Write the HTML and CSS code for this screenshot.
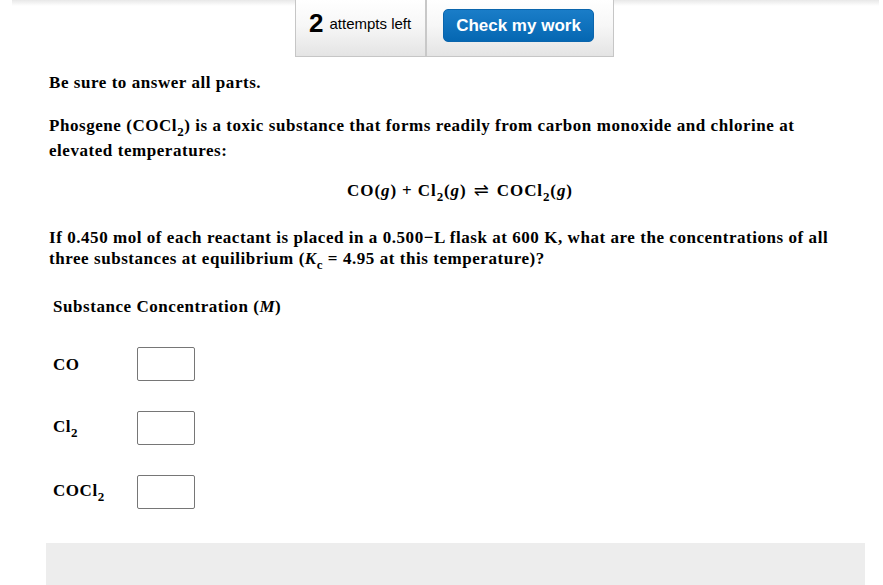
FILE: index.html
```html
<!DOCTYPE html>
<html>
<head>
<meta charset="utf-8">
<link rel="stylesheet" href="styles.css">
</head>
<body>
<div class="topshade"></div>
<div class="header">
  <div class="toolbar">
    <div class="attempts"><span class="num">2</span><span class="lbl">attempts left</span></div>
    <div class="check"><button class="btn">Check my work</button></div>
  </div>
</div>
<div class="content">
  <p class="intro">Be sure to answer all parts.</p>
  <p class="para">Phosgene (COCl<sub>2</sub>) is a toxic substance that forms readily from carbon monoxide and chlorine at elevated temperatures:</p>
  <p class="eq">CO(<i>g</i>) + Cl<sub>2</sub>(<i>g</i>) <span class="arrow">&#x21CC;</span> COCl<sub>2</sub>(<i>g</i>)</p>
  <p class="para q">If 0.450 mol of each reactant is placed in a 0.500&minus;L flask at 600 K, what are the concentrations of all three substances at equilibrium (<i>K</i><sub>c</sub> = 4.95 at this temperature)?</p>
  <div class="table">
    <div class="thead">Substance Concentration (<i>M</i>)</div>
    <div class="row"><span class="name">CO</span><input class="box" type="text"></div>
    <div class="row"><span class="name">Cl<sub>2</sub></span><input class="box" type="text"></div>
    <div class="row"><span class="name">COCl<sub>2</sub></span><input class="box" type="text"></div>
  </div>
</div>
<div class="footer"></div>
</body>
</html>
```
FILE: styles.css
```css
html, body {
  margin: 0;
  padding: 0;
  background: #fff;
}
body {
  width: 883px;
  height: 585px;
  overflow: hidden;
  position: relative;
  font-family: "Liberation Serif", "Times New Roman", serif;
  color: #000;
}
.topshade {
  position: absolute;
  left: 12px;
  right: 4px;
  top: 0;
  height: 6px;
  background: linear-gradient(#e8e8e8, rgba(255,255,255,0));
}
.header {
  display: flex;
  padding-left: 295px;
}
.toolbar {
  position: relative;
  display: flex;
  height: 56px;
  border: 1px solid #c6c6c6;
  border-top: none;
  background: linear-gradient(#ffffff 0%, #f7f7f7 45%, #e4e4e4 100%);
}
.attempts {
  width: 131px;
  display: flex;
  align-items: flex-start;
  padding-top: 10px;
  padding-left: 13px;
  box-sizing: border-box;
  border-right: 2px solid #c8c8c8;
  font-family: "Liberation Sans", Arial, sans-serif;
}
.num {
  font-weight: bold;
  font-size: 26px;
  line-height: 26px;
}
.lbl {
  font-size: 15px;
  margin-left: 6px;
  margin-top: 5px;
}
.check {
  width: 186px;
  padding: 9px 0 0 16px;
  box-sizing: border-box;
}
.btn {
  width: 151px;
  height: 33px;
  border: 1px solid #0a65ad;
  border-radius: 5px;
  background: linear-gradient(#1a7dc8, #0567b2);
  color: #fff;
  font-family: "Liberation Sans", Arial, sans-serif;
  font-weight: bold;
  font-size: 17px;
  padding: 0;
}
.content {
  padding-left: 49px;
  padding-right: 40px;
  font-weight: bold;
  font-size: 17px;
  letter-spacing: 0.55px;
  line-height: 21px;
}
.content p {
  margin: 0;
}
.intro {
  margin-top: 15px !important;
}
.para {
  margin-top: 22px !important;
}
sub {
  display: inline-block;
  font-size: 13px;
  line-height: 13px;
  vertical-align: -5px;
  padding-bottom: 2px;
}
.arrow {
  font-weight: normal;
  font-family: "DejaVu Sans", sans-serif;
  font-size: 18px;
  line-height: 1;
  margin: 0 2px;
}
.eq {
  text-align: center;
  margin-top: 19px !important;
  padding-left: 28px;
  letter-spacing: 0.9px;
}
.q {
  margin-top: 22px !important;
}
.table {
  margin-top: 23px;
  padding-left: 4px;
}
.thead {
  height: 21px;
}
.row {
  display: flex;
  align-items: center;
  height: 34px;
  margin-top: 30px;
}
.name {
  width: 84px;
}
.box {
  width: 58px;
  height: 34px;
  box-sizing: border-box;
  border: 1px solid #767676;
  border-radius: 2px;
  padding: 0;
  margin: 0;
  background: #fff;
}
.footer {
  margin: 34px 18px 0 46px;
  height: 60px;
  background: #ededed;
}
```
